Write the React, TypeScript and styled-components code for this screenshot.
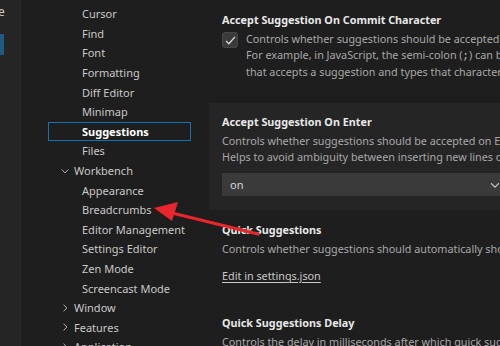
import styled, { createGlobalStyle } from "styled-components";

const GlobalStyle = createGlobalStyle`
  html, body {
    margin: 0;
    padding: 0;
    background: #1e1e1e;
  }
  body {
    font-family: "Noto Sans", "Open Sans", sans-serif;
    overflow: hidden;
  }
`;

type TocEntry = {
  label: string;
  level: 1 | 2;
  expanded?: boolean;
  selected?: boolean;
};

const TOC: TocEntry[] = [
  { label: "Cursor", level: 2 },
  { label: "Find", level: 2 },
  { label: "Font", level: 2 },
  { label: "Formatting", level: 2 },
  { label: "Diff Editor", level: 2 },
  { label: "Minimap", level: 2 },
  { label: "Suggestions", level: 2, selected: true },
  { label: "Files", level: 2 },
  { label: "Workbench", level: 1, expanded: true },
  { label: "Appearance", level: 2 },
  { label: "Breadcrumbs", level: 2 },
  { label: "Editor Management", level: 2 },
  { label: "Settings Editor", level: 2 },
  { label: "Zen Mode", level: 2 },
  { label: "Screencast Mode", level: 2 },
  { label: "Window", level: 1, expanded: false },
  { label: "Features", level: 1, expanded: false },
  { label: "Application", level: 1, expanded: false },
];

const Chevron = ({ open }: { open?: boolean }) => (
  <ChevronSvg viewBox="0 0 16 16" width="12" height="12">
    {open ? (
      <path d="M3.5 6 L8 10.5 L12.5 6" fill="none" stroke="#c5c5c5" strokeWidth="1.2" />
    ) : (
      <path d="M6 3.5 L10.5 8 L6 12.5" fill="none" stroke="#c5c5c5" strokeWidth="1.2" />
    )}
  </ChevronSvg>
);

const CheckIcon = () => (
  <svg viewBox="0 0 16 16" width="13" height="13">
    <path d="M2.5 8.5 L6 12 L13.5 3.5" fill="none" stroke="#e0e0e0" strokeWidth="1.5" />
  </svg>
);

const DownIcon = () => (
  <svg viewBox="0 0 16 16" width="14" height="14">
    <path d="M3.5 6 L8 10.5 L12.5 6" fill="none" stroke="#c5c5c5" strokeWidth="1.3" />
  </svg>
);

const App = () => {
  return (
    <>
      <GlobalStyle />
      <Window>
        <SideStrip>
          <StripText>e</StripText>
          <StripMarker />
        </SideStrip>
        <Toc>
          {TOC.map((entry) => (
            <TocRow key={entry.label} level={entry.level} selected={entry.selected}>
              {entry.level === 1 && <Chevron open={entry.expanded} />}
              <TocLabel selected={entry.selected}>{entry.label}</TocLabel>
            </TocRow>
          ))}
        </Toc>
        <SettingsPane>
          <SettingItem>
            <SettingTitle>Accept Suggestion On Commit Character</SettingTitle>
            <CheckRow>
              <CheckBox>
                <CheckIcon />
              </CheckBox>
              <Description>
                Controls whether suggestions should be accepted on commit characters.
                <br />
                For example, in JavaScript, the semi-colon (<code>;</code>) can be a commit character
                <br />
                that accepts a suggestion and types that character.
              </Description>
            </CheckRow>
          </SettingItem>
          <SettingItem focused>
            <SettingTitle>Accept Suggestion On Enter</SettingTitle>
            <Description>
              Controls whether suggestions should be accepted on Enter, in addition to Tab.
              <br />
              Helps to avoid ambiguity between inserting new lines or accepting suggestions.
            </Description>
            <Dropdown>
              <span>on</span>
              <DownIcon />
            </Dropdown>
          </SettingItem>
          <SettingItem>
            <SettingTitle>Quick Suggestions</SettingTitle>
            <Description>
              Controls whether suggestions should automatically show up while typing.
            </Description>
            <EditLink>Edit in settings.json</EditLink>
          </SettingItem>
          <SettingItem>
            <SettingTitle>Quick Suggestions Delay</SettingTitle>
            <Description>Controls the delay in milliseconds after which quick suggestions will show up.</Description>
          </SettingItem>
        </SettingsPane>
        <Arrow viewBox="0 0 500 346" width="500" height="346">
          <line x1="258" y1="234" x2="168" y2="212" stroke="#e8262c" strokeWidth="3.2" strokeLinecap="round" />
          <polygon points="154,208 178,202 172,221" fill="#e8262c" />
        </Arrow>
      </Window>
    </>
  );
};

export default App;

const Window = styled.div`
  position: relative;
  display: flex;
  width: 500px;
  height: 346px;
  overflow: hidden;
  background: #1e1e1e;
  color: #cccccc;
`;

const SideStrip = styled.div`
  flex: 0 0 20px;
  min-width: 0;
  overflow: hidden;
  background: #252526;
  border-right: 1px solid #2b2b2b;
`;

const StripText = styled.div`
  margin: 3px 0 0 -2px;
  font-size: 12px;
  color: #cccccc;
`;

const StripMarker = styled.div`
  margin-top: 14px;
  width: 4px;
  height: 21px;
  background: #1d5a85;
`;

const Toc = styled.div`
  flex: 0 0 184px;
  min-width: 0;
  overflow: hidden;
  padding-top: 4px;
  display: flex;
  flex-direction: column;
`;

const TocRow = styled.div<{ level: 1 | 2; selected?: boolean }>`
  display: flex;
  align-items: center;
  height: 19.6px;
  flex-shrink: 0;
  box-sizing: border-box;
  margin-left: 27px;
  margin-right: 14px;
  padding-left: ${(p) => (p.level === 1 ? "10px" : "33px")};
  border: 1px solid ${(p) => (p.selected ? "#0f73b5" : "transparent")};
`;

const ChevronSvg = styled.svg`
  flex: 0 0 12px;
  margin-right: 3px;
`;

const TocLabel = styled.span<{ selected?: boolean }>`
  font-size: 11px;
  white-space: nowrap;
  color: ${(p) => (p.selected ? "#ffffff" : "#c8c8c8")};
  font-weight: ${(p) => (p.selected ? 700 : 400)};
`;

const SettingsPane = styled.div`
  flex: 0 0 600px;
  display: flex;
  flex-direction: column;
`;

const SettingItem = styled.div<{ focused?: boolean }>`
  display: flex;
  flex-direction: column;
  padding: ${(p) => (p.focused ? "11px" : "12px")} 0 14px 13px;
  margin-left: 4px;
  background: ${(p) => (p.focused ? "#252526" : "transparent")};
`;

const SettingTitle = styled.div`
  font-size: 10.8px;
  font-weight: 700;
  line-height: 16px;
  color: #e8e8e8;
  white-space: nowrap;
  margin-bottom: 3px;
`;

const CheckRow = styled.div`
  display: flex;
  gap: 8px;
  padding-bottom: 9px;
`;

const CheckBox = styled.div`
  flex: 0 0 16px;
  height: 16px;
  margin-top: 1px;
  box-sizing: border-box;
  border: 1px solid #474747;
  border-radius: 3px;
  background: #3a3a3a;
  display: flex;
  align-items: center;
  justify-content: center;
`;

const Description = styled.div`
  font-size: 10.8px;
  line-height: 16px;
  color: #a8a8a8;
  white-space: nowrap;

  code {
    font-family: "Liberation Mono", monospace;
    font-size: 10.5px;
    color: #c8c8c8;
  }
`;

const Dropdown = styled.div`
  display: flex;
  align-items: center;
  justify-content: space-between;
  width: 280px;
  height: 23px;
  margin-top: 8px;
  padding: 0 0 0 8px;
  box-sizing: border-box;
  background: #3a3a3a;
  font-size: 11px;
  color: #d4d4d4;
`;

const EditLink = styled.span`
  margin: 11px 0 5px;
  font-size: 10.8px;
  line-height: 16px;
  color: #c8c8c8;
  text-decoration: underline;
  text-underline-offset: 2px;
  align-self: flex-start;
`;

const Arrow = styled.svg`
  position: absolute;
  left: 0;
  top: 0;
  pointer-events: none;
`;
